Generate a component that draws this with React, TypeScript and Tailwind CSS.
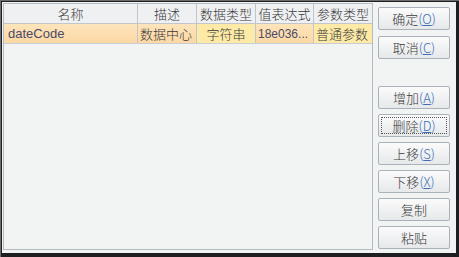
import React from "react";

const cols = [
  { w: 135, h: "名称" },
  { w: 59, h: "描述" },
  { w: 59, h: "数据类型" },
  { w: 58, h: "值表达式" },
  { w: 58, h: "参数类型" },
];

function Btn({ label, k, focus }: { label: string; k?: string; focus?: boolean }) {
  return (
    <div className="w-[72px] h-[23px] rounded-[2px] border border-[#a9b1b9] bg-gradient-to-b from-[#fbfbfb] to-[#e6e8ea] flex items-center justify-center p-[2px]">
      <div
        className={
          "w-full h-full flex items-center justify-center text-[13px] text-[#3a3a3a] leading-none " +
          (focus ? "border border-dotted border-[#555]" : "")
        }
      >
        <span>{label}</span>
        {k && (
          <span className="text-[#3b6fb8]">
            (<span className="underline underline-offset-[1px]">{k}</span>)
          </span>
        )}
      </div>
    </div>
  );
}

export default function App() {
  return (
    <div
      className="w-[459px] h-[257px] bg-[#1d1f21] border-l border-t border-[#6c6c6c] pl-px pt-px pr-[3px] pb-[4px] font-light"
      style={{ fontFamily: '"Noto Sans CJK SC", "Liberation Sans", sans-serif' }}
    >
      <div className="w-full h-full bg-[#f2f3f3] flex pl-px pt-px">
        <div className="w-[370px] h-[247px] border border-[#b4bcc3] bg-[#f2f3f3] flex flex-col">
          <div className="flex h-[20px] bg-[#eef0f2] border-b border-[#c0c6cc]">
            {cols.map((c, i) => (
              <div
                key={i}
                style={{ width: i === 0 ? c.w - 1 : c.w }}
                className={
                  "flex items-center justify-center text-[13px] text-[#3a3a3a] " +
                  (i < cols.length - 1 ? "border-r border-[#c0c6cc]" : "")
                }
              >
                {c.h}
              </div>
            ))}
          </div>
          <div className="flex h-[20px] border-b border-[#c9cdd1] text-[13px] text-[#3a3a3a]">
            <div
              className="w-[134px] bg-gradient-to-b from-[#fde4bb] to-[#fcd8a4] border-r border-[#c0c6cc] flex items-center pl-[4px] text-[#4a4a6a] font-normal"
              style={{ fontFamily: '"Liberation Sans", sans-serif' }}
            >
              dateCode
            </div>
            <div className="w-[59px] bg-gradient-to-b from-[#fde4bb] to-[#fcd8a4] border-r border-[#c0c6cc] flex items-center pl-[2px]">
              数据中心
            </div>
            <div className="w-[59px] bg-[#fdeaa6] border-r border-[#c0c6cc] flex items-center justify-center">
              字符串
            </div>
            <div
              className="w-[58px] bg-gradient-to-b from-[#fde4bb] to-[#fcd8a4] border-r border-[#c0c6cc] flex items-center pl-[2px] text-[12px] text-[#4a4a6a] font-normal"
              style={{ fontFamily: '"Liberation Sans", sans-serif' }}
            >
              18e036...
            </div>
            <div className="w-[58px] bg-[#fdeaa6] flex items-center pl-[2px]">普通参数</div>
          </div>
        </div>
        <div className="flex flex-col ml-[5px] pt-[4px]">
          <div className="flex flex-col gap-[6px]">
            <Btn label="确定" k="O" />
            <Btn label="取消" k="C" />
          </div>
          <div className="flex flex-col gap-[5px] mt-[27px]">
            <Btn label="增加" k="A" />
            <Btn label="删除" k="D" focus />
            <Btn label="上移" k="S" />
            <Btn label="下移" k="X" />
            <Btn label="复制" />
            <Btn label="粘贴" />
          </div>
        </div>
      </div>
    </div>
  );
}
